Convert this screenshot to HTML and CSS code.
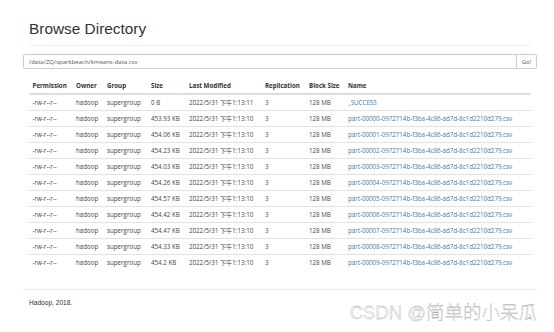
FILE: index.html
```html
<!DOCTYPE html>
<html lang="en">
<head>
  <meta charset="UTF-8">
  <title>Browsing HDFS</title>
  <link rel="stylesheet" href="styles.css">
</head>
<body>

  <div class="container">
    <div class="page-header">
      <h1>Browse Directory</h1>
    </div>

    <form class="input-group" onsubmit="return false">
      <input type="text" class="form-control" value="/data/ZQ/sparkbeach/kmeans-data.csv">
      <button class="btn">Go!</button>
    </form>

    <div class="panel">
      <table class="table" id="fileTable">
        <colgroup>
          <col style="width:43.5px">
          <col style="width:31px">
          <col style="width:44px">
          <col style="width:38px">
          <col style="width:76px">
          <col style="width:44px">
          <col style="width:39px">
          <col>
        </colgroup>
        <thead>
          <tr>
            <th>Permission</th>
            <th>Owner</th>
            <th>Group</th>
            <th>Size</th>
            <th>Last Modified</th>
            <th>Replication</th>
            <th>Block Size</th>
            <th>Name</th>
          </tr>
        </thead>
        <tbody id="fileRows"></tbody>
      </table>
    </div>

    <hr>
    <p class="footer">Hadoop, 2018.</p>
  </div>

  <div class="watermark">CSDN @简单的小呆瓜</div>

  <script>
    const files = [
      ['0 B', '2022/5/31 下午1:13:11', '_SUCCESS'],
      ['453.93 KB', '2022/5/31 下午1:13:10', 'part-00000-0972714b-f3ba-4c86-ad7d-8c1d2210d279.csv'],
      ['454.06 KB', '2022/5/31 下午1:13:10', 'part-00001-0972714b-f3ba-4c86-ad7d-8c1d2210d279.csv'],
      ['454.23 KB', '2022/5/31 下午1:13:10', 'part-00002-0972714b-f3ba-4c86-ad7d-8c1d2210d279.csv'],
      ['454.03 KB', '2022/5/31 下午1:13:10', 'part-00003-0972714b-f3ba-4c86-ad7d-8c1d2210d279.csv'],
      ['454.26 KB', '2022/5/31 下午1:13:10', 'part-00004-0972714b-f3ba-4c86-ad7d-8c1d2210d279.csv'],
      ['454.57 KB', '2022/5/31 下午1:13:10', 'part-00005-0972714b-f3ba-4c86-ad7d-8c1d2210d279.csv'],
      ['454.42 KB', '2022/5/31 下午1:13:10', 'part-00006-0972714b-f3ba-4c86-ad7d-8c1d2210d279.csv'],
      ['454.47 KB', '2022/5/31 下午1:13:10', 'part-00007-0972714b-f3ba-4c86-ad7d-8c1d2210d279.csv'],
      ['454.33 KB', '2022/5/31 下午1:13:10', 'part-00008-0972714b-f3ba-4c86-ad7d-8c1d2210d279.csv'],
      ['454.2 KB', '2022/5/31 下午1:13:10', 'part-00009-0972714b-f3ba-4c86-ad7d-8c1d2210d279.csv']
    ];

    const tbody = document.getElementById('fileRows');
    files.forEach(f => {
      const tr = document.createElement('tr');
      tr.innerHTML =
        '<td>-rw-r--r--</td>' +
        '<td>hadoop</td>' +
        '<td>supergroup</td>' +
        '<td>' + f[0] + '</td>' +
        '<td>' + f[1] + '</td>' +
        '<td>3</td>' +
        '<td>128 MB</td>' +
        '<td><a href="#">' + f[2] + '</a></td>';
      tbody.appendChild(tr);
    });
  </script>

</body>
</html>
```

FILE: styles.css
```css
body {
  margin: 0;
  background-color: #fff;
  color: #333;
  font-family: 'Liberation Sans', Arial, sans-serif;
}
.container {
  margin: 0 17px 0 23px;
}
.page-header {
  margin: 20px 6px 8px;
  padding-bottom: 8px;
  border-bottom: 1px solid #eee;
}
.page-header h1 {
  margin: 0;
  font-size: 15.4px;
  font-weight: normal;
  line-height: 17px;
  color: #333;
}
.input-group {
  display: flex;
  margin: 0;
  height: 15px;
}
.form-control {
  flex: 1;
  box-sizing: border-box;
  height: 15px;
  margin: 0;
  padding: 0 5px;
  font-family: 'Open Sans', sans-serif;
  font-size: 6px;
  color: #555;
  border: 1px solid #ccc;
  border-radius: 2px 0 0 2px;
  outline: none;
}
.btn {
  box-sizing: border-box;
  width: 21px;
  height: 15px;
  margin: 0 0 0 -1px;
  padding: 0;
  font-family: 'Open Sans', sans-serif;
  font-size: 6px;
  color: #555;
  background-color: #fff;
  border: 1px solid #ccc;
  border-radius: 0 2px 2px 0;
}
.panel {
  margin: 9px 6px 0;
}
.table {
  width: 100%;
  table-layout: fixed;
  border-collapse: collapse;
  font-family: 'Open Sans', 'Noto Sans CJK SC', sans-serif;
  font-size: 6.2px;
  line-height: 9px;
  color: #444;
}
.table th {
  text-align: left;
  font-weight: bold;
  color: #333;
  padding: 3px 3.5px;
  border-bottom: 2px solid #ddd;
  white-space: nowrap;
}
.table td {
  padding: 3px 3.5px;
  border-top: 1px solid #e2e2e2;
  white-space: nowrap;
}
.table tbody tr:first-child td {
  border-top: none;
}
.table a {
  color: #337ab7;
  text-decoration: none;
}
hr {
  margin: 19px 0 0;
  border: 0;
  border-top: 1px solid #eee;
}
.footer {
  margin: 8px 6px;
  font-size: 6.6px;
  line-height: 9px;
}
.watermark {
  position: absolute;
  right: 17px;
  top: 301px;
  font-family: 'Liberation Sans', 'Noto Sans CJK SC', sans-serif;
  font-size: 18.5px;
  font-weight: 300;
  line-height: 24px;
  color: #f8f8f8;
  -webkit-text-stroke: 0.3px #a0a0a0;
}
```
